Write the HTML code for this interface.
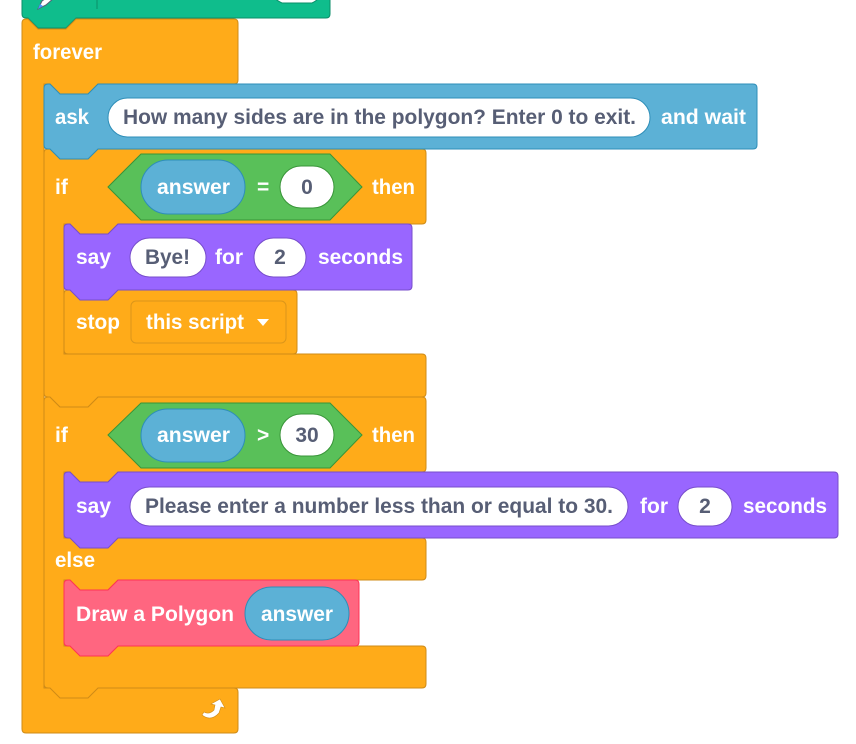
<!DOCTYPE html>
<html><head><meta charset="utf-8"><style>
html,body{margin:0;padding:0;background:#fff;width:856px;height:744px;overflow:hidden}
svg{display:block}
text{font-family:"Liberation Sans",Arial,sans-serif;font-weight:bold;font-size:21px}
.w{fill:#fff}
.d{fill:#575E75}
</style></head><body>
<svg width="856" height="744" viewBox="0 0 856 744" xmlns="http://www.w3.org/2000/svg">
<!-- green top block -->
<path d="M22,-10 H326 Q330,-10 330,-6 V14 Q330,18 326,18 H76 L66,28 H38 L28,18 H26 Q22,18 22,14 Z" fill="#0FBD8C" stroke="#0B8E69" stroke-width="1"/>
<line x1="97" y1="0" x2="97" y2="9" stroke="#0B8E69" stroke-width="1"/>
<path d="M272,-6 H318 Q322,-2 312,3 H282 Q272,-2 272,-6 Z" fill="#fff" stroke="#0B8E69" stroke-width="1"/>
<path d="M38,9 L42,1 L52,-6 L54,-2 L46,5 Z" fill="#fff" stroke="#575E75" stroke-width="1"/>
<path d="M38,9 L40,4 L43,6 Z" fill="#4C97FF"/>

<!-- forever -->
<path d="M22,23 Q22,19 26,19 H28 L38,29 H66 L76,19 H234 Q238,19 238,23 V80 Q238,84 234,84 H98 L88,94 H60 L50,84 H44 V688 H234 Q238,688 238,692 V729 Q238,733 234,733 H26 Q22,733 22,729 Z" fill="#FFAB19" stroke="#CF8B17" stroke-width="1"/>
<text x="33" y="59" class="w" textLength="69" lengthAdjust="spacingAndGlyphs">forever</text>
<path d="M202,715 Q211,722 219,713 L221,707 L225,708 L220,699 L211,704 L215,705 L214,710 Q209,715 204,712 Z" fill="#fff" stroke="#CF8B17" stroke-width="0.6"/>

<!-- if-else block -->
<path d="M44,401 Q44,397 48,397 H50 L60,407 H88 L98,397 H422 Q426,397 426,401 V468 Q426,472 422,472 H118 L108,482 H80 L70,472 H64 V538 H422 Q426,538 426,542 V576 Q426,580 422,580 H118 L108,590 H80 L70,580 H64 V646 H422 Q426,646 426,650 V684 Q426,688 422,688 H98 L88,698 H60 L50,688 H48 Q44,688 44,684 Z" fill="#FFAB19" stroke="#CF8B17" stroke-width="1"/>
<text x="55" y="442" class="w">if</text>
<polygon points="108,435 141,403 330,403 362,435 330,468 141,468" fill="#59C059" stroke="#389438" stroke-width="1"/>
<rect x="141" y="409" width="104" height="53" rx="26.5" fill="#5CB1D6" stroke="#2E8EB8" stroke-width="1"/>
<text x="157" y="442" class="w" textLength="73" lengthAdjust="spacingAndGlyphs">answer</text>
<text x="257" y="442" class="w">&gt;</text>
<rect x="280" y="414" width="54" height="42" rx="21" fill="#fff" stroke="#389438" stroke-width="1"/>
<text x="307" y="442" class="d" text-anchor="middle">30</text>
<text x="372" y="442" class="w" textLength="43" lengthAdjust="spacingAndGlyphs">then</text>
<text x="55" y="567" class="w" textLength="40" lengthAdjust="spacingAndGlyphs">else</text>

<!-- if block -->
<path d="M44,153 Q44,149 48,149 H50 L60,159 H88 L98,149 H422 Q426,149 426,153 V220 Q426,224 422,224 H118 L108,234 H80 L70,224 H64 V354 H422 Q426,354 426,358 V393 Q426,397 422,397 H98 L88,407 H60 L50,397 H48 Q44,397 44,393 Z" fill="#FFAB19" stroke="#CF8B17" stroke-width="1"/>
<text x="55" y="194" class="w">if</text>
<polygon points="108,187 141,154 330,154 362,187 330,220 141,220" fill="#59C059" stroke="#389438" stroke-width="1"/>
<rect x="141" y="160" width="104" height="54" rx="27" fill="#5CB1D6" stroke="#2E8EB8" stroke-width="1"/>
<text x="157" y="194" class="w" textLength="73" lengthAdjust="spacingAndGlyphs">answer</text>
<text x="257" y="194" class="w">=</text>
<rect x="280" y="166" width="54" height="42" rx="21" fill="#fff" stroke="#389438" stroke-width="1"/>
<text x="307" y="194" class="d" text-anchor="middle">0</text>
<text x="372" y="194" class="w" textLength="43" lengthAdjust="spacingAndGlyphs">then</text>

<!-- ask -->
<path d="M44,88 Q44,84 48,84 H50 L60,94 H88 L98,84 H753 Q757,84 757,88 V145 Q757,149 753,149 H98 L88,159 H60 L50,149 H48 Q44,149 44,145 Z" fill="#5CB1D6" stroke="#2E8EB8" stroke-width="1"/>
<text x="55" y="124" class="w" textLength="34" lengthAdjust="spacingAndGlyphs">ask</text>
<rect x="108" y="98" width="542" height="39" rx="19.5" fill="#fff" stroke="#2E8EB8" stroke-width="1"/>
<text x="123" y="124" class="d" textLength="513" lengthAdjust="spacingAndGlyphs">How many sides are in the polygon? Enter 0 to exit.</text>
<text x="661" y="124" class="w" textLength="85" lengthAdjust="spacingAndGlyphs">and wait</text>

<!-- stop -->
<path d="M64,294 Q64,290 68,290 H293 Q297,290 297,294 V350 Q297,354 293,354 H68 Q64,354 64,350 Z" fill="#FFAB19" stroke="#CF8B17" stroke-width="1"/>
<text x="76" y="329" class="w" textLength="44" lengthAdjust="spacingAndGlyphs">stop</text>
<rect x="131" y="301" width="155" height="42" rx="5" fill="#FFAB19" stroke="#DB961A" stroke-width="1"/>
<text x="146" y="329" class="w" textLength="98" lengthAdjust="spacingAndGlyphs">this script</text>
<polygon points="257,319 269,319 263,326" fill="#fff"/>

<!-- say 1 -->
<path d="M64,228 Q64,224 68,224 H70 L80,234 H108 L118,224 H408 Q412,224 412,228 V286 Q412,290 408,290 H118 L108,300 H80 L70,290 H68 Q64,290 64,286 Z" fill="#9966FF" stroke="#774DCB" stroke-width="1"/>
<text x="76" y="264" class="w" textLength="35" lengthAdjust="spacingAndGlyphs">say</text>
<rect x="130" y="238" width="76" height="39" rx="19.5" fill="#fff" stroke="#774DCB" stroke-width="1"/>
<text x="145" y="264" class="d" textLength="45" lengthAdjust="spacingAndGlyphs">Bye!</text>
<text x="215" y="264" class="w" textLength="28" lengthAdjust="spacingAndGlyphs">for</text>
<rect x="254" y="238" width="52" height="39" rx="19.5" fill="#fff" stroke="#774DCB" stroke-width="1"/>
<text x="280" y="264" class="d" text-anchor="middle">2</text>
<text x="318" y="264" class="w" textLength="85" lengthAdjust="spacingAndGlyphs">seconds</text>

<!-- say 2 -->
<path d="M64,476 Q64,472 68,472 H70 L80,482 H108 L118,472 H834 Q838,472 838,476 V534 Q838,538 834,538 H118 L108,548 H80 L70,538 H68 Q64,538 64,534 Z" fill="#9966FF" stroke="#774DCB" stroke-width="1"/>
<text x="76" y="513" class="w" textLength="35" lengthAdjust="spacingAndGlyphs">say</text>
<rect x="130" y="487" width="498" height="39" rx="19.5" fill="#fff" stroke="#774DCB" stroke-width="1"/>
<text x="145" y="513" class="d" textLength="468" lengthAdjust="spacingAndGlyphs">Please enter a number less than or equal to 30.</text>
<text x="640" y="513" class="w" textLength="28" lengthAdjust="spacingAndGlyphs">for</text>
<rect x="678" y="487" width="54" height="39" rx="19.5" fill="#fff" stroke="#774DCB" stroke-width="1"/>
<text x="705" y="513" class="d" text-anchor="middle">2</text>
<text x="743" y="513" class="w" textLength="84" lengthAdjust="spacingAndGlyphs">seconds</text>

<!-- draw a polygon -->
<path d="M64,584 Q64,580 68,580 H70 L80,590 H108 L118,580 H355 Q359,580 359,584 V642 Q359,646 355,646 H118 L108,656 H80 L70,646 H68 Q64,646 64,642 Z" fill="#FF6680" stroke="#FF3355" stroke-width="1"/>
<text x="76" y="621" class="w" textLength="158" lengthAdjust="spacingAndGlyphs">Draw a Polygon</text>
<rect x="245" y="587" width="104" height="53" rx="26.5" fill="#5CB1D6" stroke="#2E8EB8" stroke-width="1"/>
<text x="261" y="621" class="w" textLength="72" lengthAdjust="spacingAndGlyphs">answer</text>
</svg>
</body></html>
